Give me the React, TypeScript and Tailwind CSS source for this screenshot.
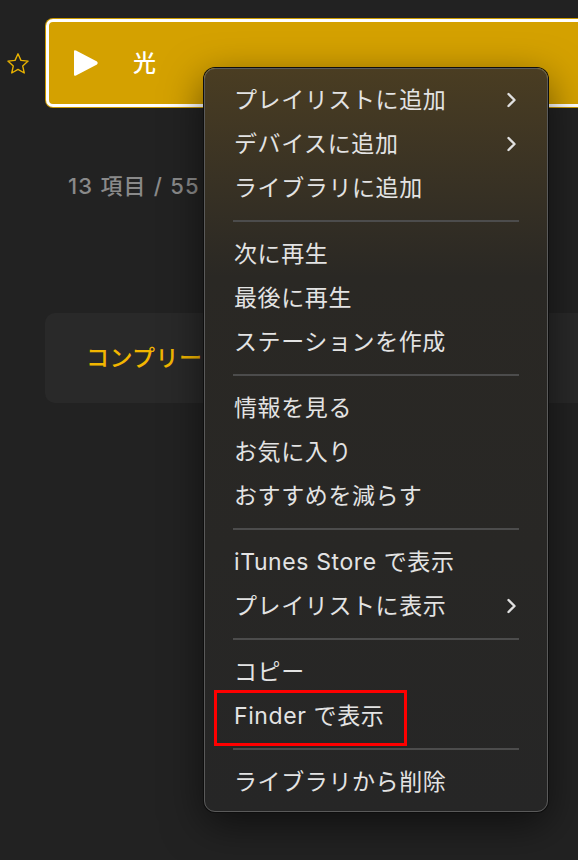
import React from 'react';

type MenuEntry = { label: string; submenu?: boolean } | 'separator';

const menuEntries: MenuEntry[] = [
  { label: 'プレイリストに追加', submenu: true },
  { label: 'デバイスに追加', submenu: true },
  { label: 'ライブラリに追加' },
  'separator',
  { label: '次に再生' },
  { label: '最後に再生' },
  { label: 'ステーションを作成' },
  'separator',
  { label: '情報を見る' },
  { label: 'お気に入り' },
  { label: 'おすすめを減らす' },
  'separator',
  { label: 'iTunes Store で表示' },
  { label: 'プレイリストに表示', submenu: true },
  'separator',
  { label: 'コピー' },
  { label: 'Finder で表示' },
  'separator',
  { label: 'ライブラリから削除' },
];

function StarOutline() {
  return (
    <svg width="24" height="24" viewBox="0 0 24 24" fill="none" stroke="#e8b200" strokeWidth="1.4" strokeLinejoin="round">
      <path d="M12 1.8l2.95 6.6 7.15.7-5.4 4.8 1.55 7.1L12 17.4l-6.25 3.6 1.55-7.1-5.4-4.8 7.15-.7z" />
    </svg>
  );
}

function Chevron() {
  return (
    <svg width="11" height="16" viewBox="0 0 11 16" fill="none" stroke="#e0e0e0" strokeWidth="2.4" strokeLinecap="round" strokeLinejoin="round">
      <path d="M2.5 2l6 6-6 6" />
    </svg>
  );
}

// Context menu shown over the track row
function ContextMenu() {
  return (
    <div className="absolute left-[204px] top-[68px] w-[344px] h-[744px] rounded-[11px] border border-[#5a5a5a] bg-linear-to-b from-[#4a3d22] from-0% via-[#2a2824] via-[28%] to-[#262626] to-100% pt-[9px] pb-[7px] shadow-[0_0_0_1px_#0e0e0e,0_12px_40px_rgba(0,0,0,0.55)]">
      {menuEntries.map((entry, idx) =>
        entry === 'separator' ? (
          <div key={idx} className="h-[22px] flex items-center px-[28px]">
            <div className="h-[1.5px] w-full bg-[#4c4c4c]" />
          </div>
        ) : (
          <div
            key={idx}
            className="h-[44px] flex items-center justify-between pl-[29px] pr-[30px] text-[23px] tracking-[0.6px] text-[#e3e3e3] leading-none"
          >
            <span>{entry.label}</span>
            {entry.submenu && <Chevron />}
          </div>
        )
      )}

      {/* annotation box around the Finder entry */}
      <div className="absolute left-[9px] top-[621px] w-[193px] h-[56px] border-[3px] border-[#ff0000]" />
    </div>
  );
}

export default function App() {
  return (
    <div
      className="relative w-[578px] h-[860px] overflow-hidden bg-[#222222]"
      style={{ fontFamily: '"Inter", "Noto Sans CJK JP", sans-serif' }}
    >
      {/* Now playing row */}
      <div className="flex items-center pt-[19px] pl-[6px]">
        <div className="w-[24px] mt-[2px]">
          <StarOutline />
        </div>
        <div className="ml-[16px] w-[560px] h-[88px] shrink-0 rounded-[7px] border-[3px] border-white bg-[#d4a100] ring-1 ring-[#c99900] flex items-center pl-[24px]">
          <svg width="26" height="28" viewBox="0 0 26 28">
            <path d="M1 2.5 Q1 0.5 3 1.6 L24 12.5 Q25.6 14 24 15.5 L3 26.4 Q1 27.5 1 25.5 Z" fill="#ffffff" />
          </svg>
          <span className="ml-[34px] text-[23px] font-medium text-white">光</span>
        </div>
      </div>

      {/* Summary */}
      <div className="mt-[64px] pl-[68px] text-[22px] font-medium tracking-[1.2px] text-[#8a8a8a] leading-[30px]">
        13 項目 / 55 分
      </div>

      {/* Album card */}
      <div className="mt-[112px] ml-[45px] w-[560px] h-[90px] rounded-[10px] bg-[#292929] flex items-center pl-[41px]">
        <span className="text-[23px] font-medium tracking-[0.4px] text-[#f2b600]">コンプリート</span>
      </div>

      <ContextMenu />
    </div>
  );
}
